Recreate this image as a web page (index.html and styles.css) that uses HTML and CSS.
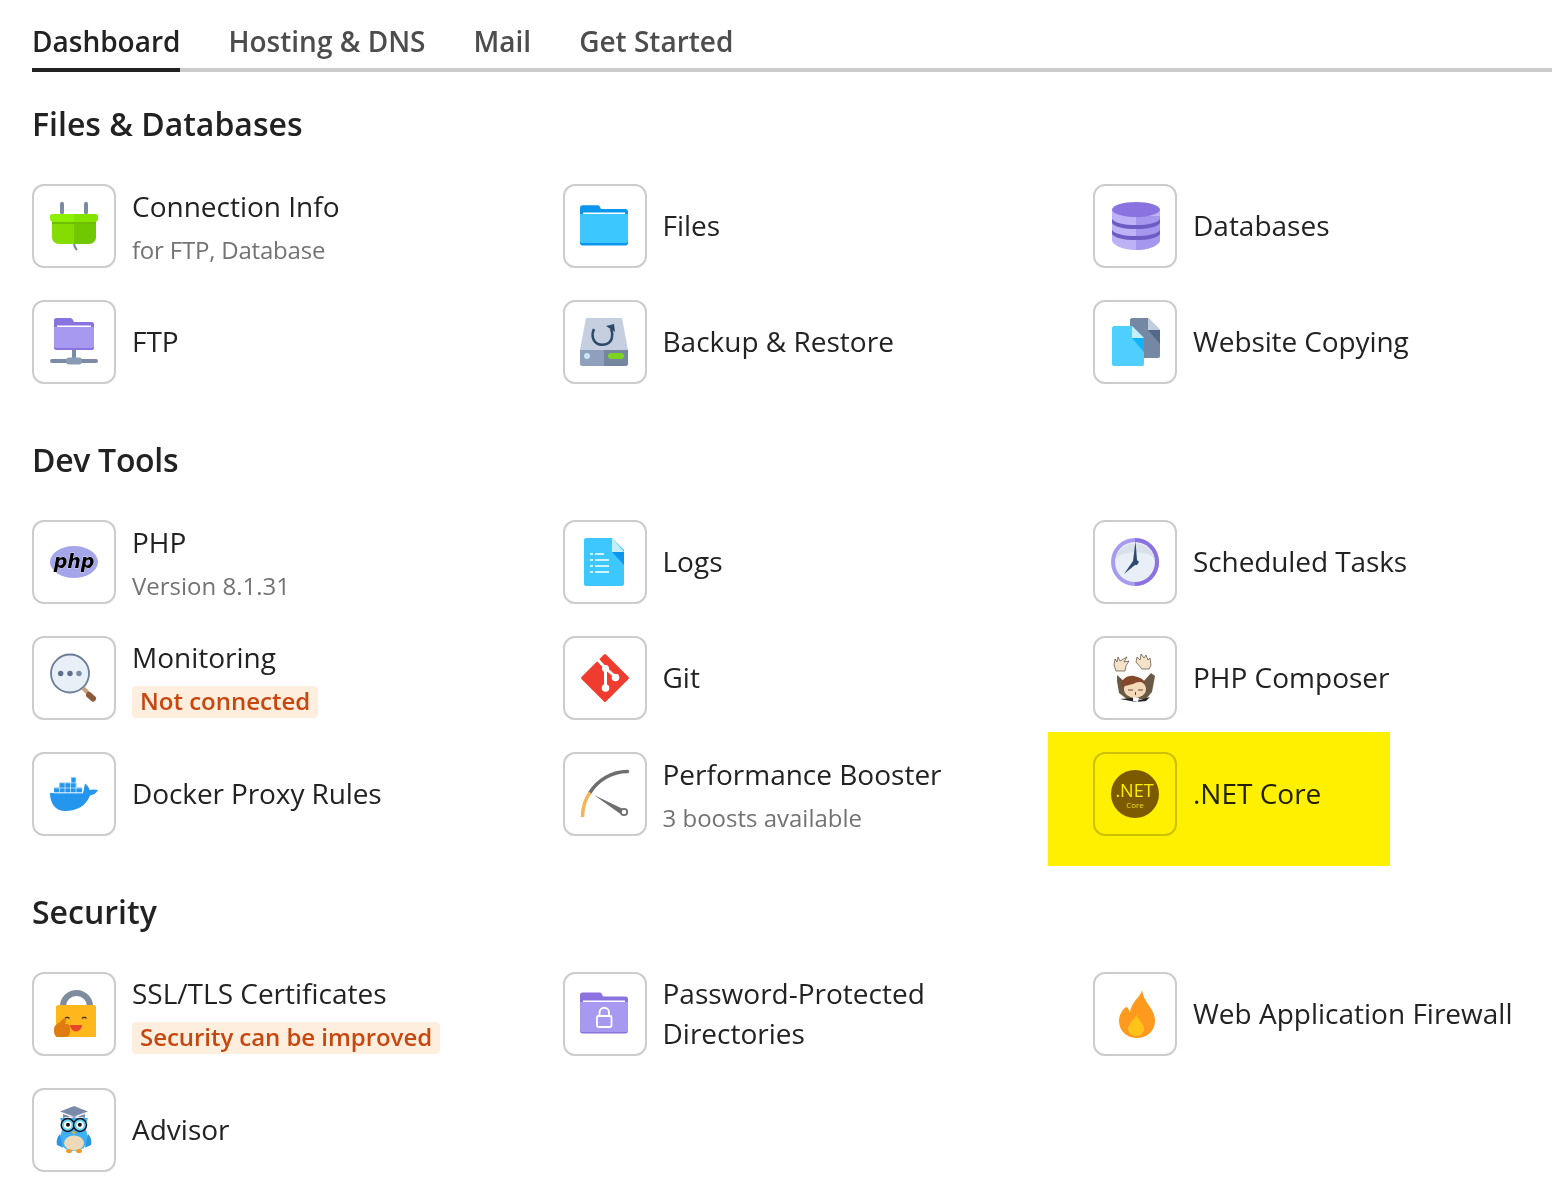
FILE: index.html
```html
<!DOCTYPE html>
<html lang="en">
<head>
<meta charset="utf-8">
<title>Dashboard</title>
<link rel="stylesheet" href="styles.css">
</head>
<body>
<nav class="tabs">
  <a class="tab active">Dashboard</a>
  <a class="tab">Hosting &amp; DNS</a>
  <a class="tab">Mail</a>
  <a class="tab">Get Started</a>
</nav>

<section class="section">
  <h2 class="section-title">Files &amp; Databases</h2>
  <div class="grid">
    <div class="item">
      <div class="icon-box"><svg class="icon" viewBox="0 0 48 48">
        <rect x="10" y="0" width="4" height="12" rx="1.5" fill="#7b8aa5"/><rect x="34" y="0" width="4" height="12" rx="1.5" fill="#7b8aa5"/>
        <path d="M24 41c0 3 1 5 3 7" fill="none" stroke="#7b8aa5" stroke-width="2"/>
        <path d="M2 19h22v23h-15c-4 0-7-3-7-7z" fill="#84dc00"/><path d="M24 19h22v16c0 4-3 7-7 7h-15z" fill="#70c800"/>
        <rect x="2" y="19" width="44" height="3" fill="#6fbf00"/>
        <path d="M2 12h22v8h-21c-2 0-3-2-3-4v-2c0-1 1-2 2-2z" fill="#8cf000"/><path d="M24 12h22c1 0 2 1 2 2v2c0 2-1 4-3 4h-21z" fill="#82e400"/>
      </svg></div>
      <div class="text"><div class="name">Connection Info</div><div class="sub narrow-2">for FTP, Database</div></div>
    </div>
    <div class="item">
      <div class="icon-box"><svg class="icon" viewBox="1 0 48 48">
        <path d="M0 6c0-1.500 1-2.700 2.500-2.700h15c1.200 0 2 .5 2.500 1.700l1 2h24.500c1.500 0 2.500 1 2.500 2.500v31.500c0 1.500-1 2.500-2.500 2.500h-43c-1.500 0-2.500-1-2.500-2.500z" fill="#0b96ee"/>
        <path d="M0 12h48v27c0 1-1 2-2 2h-44c-1 0-2-1-2-2z" fill="#3cc8ff"/>
        <rect x="3" y="10.500" width="42" height="1.500" fill="#fff"/>
      </svg></div>
      <div class="text"><div class="name">Files</div></div>
    </div>
    <div class="item">
      <div class="icon-box"><svg class="icon" viewBox="-1 0 48 48">
        <path d="M0 8h48v30c0 5-11 10-24 10s-24-5-24-10z" fill="#bdb2f5"/>
        <path d="M24 14h24v24c0 5-11 10-24 10z" fill="#a596ee"/>
        <path d="M0 17c3 4 12 6 24 6s21-2 24-6v4c-3 4-12 6-24 6s-21-2-24-6z" fill="#6f5bc4"/>
        <path d="M0 28c3 4 12 6 24 6s21-2 24-6v4c-3 4-12 6-24 6s-21-2-24-6z" fill="#6f5bc4"/>
        <ellipse cx="24" cy="7.500" rx="24" ry="7.500" fill="#8a73e0"/>
      </svg></div>
      <div class="text"><div class="name">Databases</div></div>
    </div>
    <div class="item">
      <div class="icon-box"><svg class="icon" viewBox="0 0 48 48">
        <path d="M4 2c0-1 1-2 2-2h14c1 0 2 .5 3 2l1 2h18c1 0 2 1 2 2v24c0 1-1 2-2 2h-36c-1 0-2-1-2-2z" fill="#8a73e0"/>
        <path d="M4 9h40v19c0 1-1 2-2 2h-36c-1 0-2-1-2-2z" fill="#a899f0"/>
        <rect x="7" y="7.500" width="34" height="1.500" fill="#fff"/>
        <rect x="22" y="32" width="4" height="10" fill="#7b8aa5"/>
        <rect x="0" y="41" width="48" height="4" rx="2" fill="#7b8aa5"/>
        <rect x="16" y="39.500" width="16" height="7" rx="3" fill="#8a9bb5"/>
      </svg></div>
      <div class="text"><div class="name">FTP</div></div>
    </div>
    <div class="item">
      <div class="icon-box"><svg class="icon" viewBox="1 0 48 48">
        <path d="M6 0h36l6 32h-48z" fill="#c5cfe0"/>
        <path d="M0 32h24v16h-22c-1 0-2-1-2-2z" fill="#8ea0bb"/><path d="M24 32h24v14c0 1-1 2-2 2h-22z" fill="#76869f"/>
        <circle cx="7" cy="38" r="3" fill="#c9e6f8"/>
        <rect x="28" y="35" width="16" height="6" rx="3" fill="#7ed321"/>
        <path d="M14 11c-3 6-1 13 4 15 6 2 13 0 14-7 .5-3 0-6-1-8" fill="none" stroke="#2d4a68" stroke-width="2.500"/>
        <path d="M26 8l8-2 1 8z" fill="#2d4a68"/>
      </svg></div>
      <div class="text"><div class="name">Backup &amp; Restore</div></div>
    </div>
    <div class="item">
      <div class="icon-box"><svg class="icon" viewBox="-1 0 48 48">
        <path d="M18 2c0-1 1-2 2-2h16l12 12v26c0 1-1 2-2 2h-26c-1 0-2-1-2-2z" fill="#7488a3"/>
        <path d="M36 12l12 14v-14z" fill="#53698a"/><path d="M36 0l12 12h-12z" fill="#c2cde0"/>
        <path d="M0 10c0-1 1-2 2-2h18l12 12v26c0 1-1 2-2 2h-28c-1 0-2-1-2-2z" fill="#4ecfff"/>
        <path d="M20 20l12 14v-14z" fill="#0fb3fa"/><path d="M20 8l12 12h-12z" fill="#c5eefc"/>
      </svg></div>
      <div class="text"><div class="name narrow-1">Website Copying</div></div>
    </div>
  </div>
</section>

<section class="section">
  <h2 class="section-title narrow-3">Dev Tools</h2>
  <div class="grid">
    <div class="item">
      <div class="icon-box"><svg class="icon" viewBox="0 0 48 48">
        <ellipse cx="24" cy="24" rx="24" ry="16" fill="#a5a5ea"/>
        <text class="php-mark" x="24" y="29.500">php</text>
      </svg></div>
      <div class="text"><div class="name">PHP</div><div class="sub">Version 8.1.31</div></div>
    </div>
    <div class="item">
      <div class="icon-box"><svg class="icon" viewBox="1 0 48 48">
        <path d="M6 0h26l12 12v34c0 1-1 2-2 2h-36c-1 0-2-1-2-2v-44c0-1 1-2 2-2z" fill="#3cc8ff"/>
        <path d="M32 14h12v13z" fill="#0b96ee"/><path d="M32 0l12 14h-12z" fill="#c5eefc"/>
        <path d="M10 16h3M15 16h9M10 22h3M15 22h14M10 28h3M15 28h14M10 34h3M15 34h14" stroke="#fff" stroke-width="1.300" fill="none"/>
      </svg></div>
      <div class="text"><div class="name">Logs</div></div>
    </div>
    <div class="item">
      <div class="icon-box"><svg class="icon" viewBox="0 0 48 48">
        <circle cx="24" cy="24" r="24" fill="#a79bf0"/>
        <path d="M24 0a24 24 0 0 1 0 48z" fill="#8a73e0"/>
        <circle cx="24" cy="24" r="20" fill="#e9eff7"/>
        <path d="M4.500 21a20 20 0 0 1 39 0c-5-9-34-9-39 0z" fill="#d9e0ea"/>
        <path d="M24.500 3l1.500 19 2 2-2 3-2 0-11 9 9-13z" fill="#2d4a70"/>
      </svg></div>
      <div class="text"><div class="name narrow-1">Scheduled Tasks</div></div>
    </div>
    <div class="item">
      <div class="icon-box"><svg class="icon" viewBox="0 0 48 48">
        <circle cx="20" cy="19.500" r="19" fill="#e9eff7" stroke="#6b7c98" stroke-width="1.800"/>
        <circle cx="10.700" cy="19.500" r="2.700" fill="#5d6e8a"/><circle cx="20" cy="19.500" r="2.700" fill="#5d6e8a"/><circle cx="29" cy="19.500" r="2.700" fill="#7b8aa5"/>
        <path d="M33 34l5 5" stroke="#c9a37c" stroke-width="4"/>
        <path d="M39 41l4 3.500" stroke="#8a5a3a" stroke-width="6" stroke-linecap="round"/>
      </svg></div>
      <div class="text"><div class="name">Monitoring</div><div class="badge">Not connected</div></div>
    </div>
    <div class="item">
      <div class="icon-box"><svg class="icon" viewBox="0 0 48 48">
        <path d="M24 0l24 24-24 24-24-24z" fill="#f03c2e" stroke="#f03c2e" stroke-width="3" stroke-linejoin="round" transform="translate(1.440 1.440) scale(.94)"/>
        <path d="M17 6l7.500 8v19M24.500 14l10 9" fill="none" stroke="#fff" stroke-width="3"/>
        <circle cx="24.500" cy="14.500" r="3.500" fill="#fff"/><circle cx="24.500" cy="34" r="3.800" fill="#fff"/><circle cx="34.500" cy="23.500" r="3.800" fill="#fff"/>
      </svg></div>
      <div class="text"><div class="name">Git</div></div>
    </div>
    <div class="item">
      <div class="icon-box"><svg class="icon" viewBox="0 0 48 48">
        <path d="M6 21l9 8 17-1 8-9 4 3-3 16-6 7-18 1-9-7-2-12z" fill="#6a5a45"/>
        <path d="M4 18l11 3M44 15l-11 6" stroke="#fff" stroke-width="3" stroke-linecap="round"/>
        <path d="M5 17l-2-6 1-6 2 3 1-5 2 4 7-4-3 5 5-1-3 5-1 5z" fill="#f4e3c8" stroke="#3a2a1a" stroke-width=".6"/>
        <path d="M31 15l-6-7 1-5 3 3 1-6 3 4 2-3 2 5 2-2 1 7-2 4z" fill="#f4e3c8" stroke="#3a2a1a" stroke-width=".6"/>
        <ellipse cx="24" cy="35" rx="11" ry="9" fill="#f3d9b8"/>
        <path d="M10 33c-1-7 6-12 13-11 5 1 10 3 12 8-6-3-9-2-13 0-4 1-8 2-12 3z" fill="#83492a"/>
        <path d="M17 36h5M27 36h5M24.500 38v3" stroke="#3a2a1a" stroke-width=".8"/>
        <path d="M9 45l14-1 6 2 10-3-4 4-10 1z" fill="#222"/>
        <path d="M22 43l6 1-1 4-5-1z" fill="#fff"/>
      </svg></div>
      <div class="text"><div class="name">PHP Composer</div></div>
    </div>
    <div class="item">
      <div class="icon-box"><svg class="icon" viewBox="0 0 48 48">
        <path d="M0 23h33c1-3 1-6 2-9.500 2.500 2 4 4 4.500 6.500 2-.5 5-1 8.500 0-1.500 3-4.500 5-8 5.500C36 36 27 41 15 41 5 41 0 33 0 23z" fill="#2496ed"/>
        <path d="M4 17.500h28v5h-28zM9.500 12.500h17v5h-17zM21 7.500h5v5h-5z" fill="#2496ed"/>
        <path d="M4 18h28M4 23h29M9.500 18v5M15 13v10M20.500 13v10M26 8v15M9.500 12.800h17M21 8v5" stroke="#fff" stroke-width=".6" fill="none"/>
      </svg></div>
      <div class="text"><div class="name narrow-1">Docker Proxy Rules</div></div>
    </div>
    <div class="item">
      <div class="icon-box"><svg class="icon" viewBox="0 0 48 48">
        <path d="M46.500 1.500c-16 0-30 9-37.500 21" fill="none" stroke="#6e6e6e" stroke-width="3.500" stroke-linecap="round"/>
        <path d="M9 22.500c-5 7-7.500 15-7.500 24.500" fill="none" stroke="#f5b45a" stroke-width="3.500"/>
        <path d="M13 25l29 14-2.500 5z" fill="#6e6e6e"/>
        <circle cx="43" cy="42" r="3.200" fill="#fff" stroke="#6e6e6e" stroke-width="1.800"/>
      </svg></div>
      <div class="text"><div class="name">Performance Booster</div><div class="sub">3 boosts available</div></div>
    </div>
    <div class="item">
      <div class="icon-box"><svg class="icon" viewBox="0 0 48 48">
        <circle cx="24" cy="24" r="24" fill="#7b5fa6"/>
        <text class="net-mark" x="23.500" y="27">.NET</text>
        <text class="net-sub" x="24" y="37.500">Core</text>
      </svg></div>
      <div class="text"><div class="name">.NET Core</div></div>
      <div class="highlight"></div>
    </div>
  </div>
</section>

<section class="section">
  <h2 class="section-title">Security</h2>
  <div class="grid">
    <div class="item">
      <div class="icon-box"><svg class="icon" viewBox="0 0 48 48">
        <path d="M13 17v-1c0-7 6-13 13.500-13s13.500 6 13.500 13v1" fill="none" stroke="#7f8c9d" stroke-width="6"/>
        <path d="M6 17c0-1 1-2 2-2h36c1 0 2 1 2 2v30h-40z" fill="#ffb71b"/>
        <path d="M15 28.500c1-1.500 3.500-1.500 4.500 0M32 28.500c1-1.500 3.500-1.500 4.500 0" stroke="#3a2a1a" stroke-width="1.300" fill="none"/>
        <path d="M20 35h12c0 3.500-3 6.500-6 6.500s-6-3-6-6.500z" fill="#e8462a"/>
        <path d="M4 40c0-5 3-6 6-8l3-3c2-1.500 3 0 3 2l-1 3h2c2 0 3 2 3 4v4c0 3-2 5-5 5h-7c-3 0-4-3-4-7z" fill="#e07b10"/>
      </svg></div>
      <div class="text"><div class="name">SSL/TLS Certificates</div><div class="badge narrow-half">Security can be improved</div></div>
    </div>
    <div class="item">
      <div class="icon-box"><svg class="icon" viewBox="1 0 48 48">
        <path d="M0 5c0-1.500 1-2.500 2.500-2.500h17c1.200 0 2 .5 2.500 1.700l1 2.300h22.500c1.500 0 2.500 1 2.500 2.500v32c0 1.500-1 2.500-2.500 2.500h-43c-1.500 0-2.500-1-2.500-2.500z" fill="#8a73e0"/>
        <path d="M0 12h48v28c0 1.500-1 2-2 2h-44c-1 0-2-.5-2-2z" fill="#a899f0"/>
        <rect x="3" y="10.500" width="42" height="1.500" fill="#fff"/>
        <rect x="17" y="26" width="14.500" height="11" rx="1.500" fill="none" stroke="#fff" stroke-width="1.800"/>
        <path d="M19.500 26v-3.500a4.700 4.700 0 0 1 9.500 0v3.500" fill="none" stroke="#fff" stroke-width="1.800"/>
      </svg></div>
      <div class="text"><div class="name">Password-Protected<br>Directories</div></div>
    </div>
    <div class="item">
      <div class="icon-box"><svg class="icon" viewBox="0 0 48 48">
        <path d="M31 0c-1 6-8 10-11 18-1 2-1 5-1 5-1-3-2-6-4-6-4 3-7 8-7 14 0 10 8 17 18 17s18-7 18-17c0-13-11-17-13-31z" fill="#ff9a1f"/>
        <path d="M25 24c1 4-8 9-8 15 0 4 4 7 8 7s8-3 8-7c0-6-6-9-8-15z" fill="#ffc31a"/>
      </svg></div>
      <div class="text"><div class="name">Web Application Firewall</div></div>
    </div>
    <div class="item">
      <div class="icon-box"><svg class="icon" viewBox="0 0 48 48">
        <path d="M10 12l3 8-1 4-2 7c-1 8 5 14 14 14s14-6 14-14l-2-7-1-4 3-8z" fill="#3fb0f0"/>
        <path d="M10 28c-3 3-4 7-3 11 2 1 5 2 6 3z" fill="#2a95e8"/><path d="M38 28c3 3 4 7 3 11-2 1-5 2-6 3z" fill="#2a95e8"/>
        <ellipse cx="24" cy="37" rx="10" ry="7.500" fill="#ecd9b8"/>
        <path d="M24 0l14 5.500-14 5-14-5z" fill="#7a8aa8"/><path d="M13 8v4c6-2 16-2 22 0v-4l-11 4z" fill="#7a8aa8"/>
        <circle cx="17.700" cy="19" r="6.500" fill="#5ed0e8" stroke="#112" stroke-width="1.400"/><circle cx="30" cy="19" r="6.500" fill="#5ed0e8" stroke="#112" stroke-width="1.400"/>
        <circle cx="17.700" cy="19" r="3.800" fill="#fff"/><circle cx="30" cy="19" r="3.800" fill="#fff"/>
        <circle cx="18" cy="18.700" r="2" fill="#111"/><circle cx="29.800" cy="18.700" r="2" fill="#111"/>
        <path d="M21.800 25.500h4l-2 3.500z" fill="#f4a91f"/>
        <ellipse cx="19" cy="45" rx="3" ry="2" fill="#ef9a2a"/><ellipse cx="29" cy="45" rx="3" ry="2" fill="#ef9a2a"/>
      </svg></div>
      <div class="text"><div class="name">Advisor</div></div>
    </div>
  </div>
</section>
</body>
</html>
```
FILE: styles.css
```css
* { box-sizing: border-box; }
html, body { margin: 0; padding: 0; background: #fff; }
body {
  width: 1552px;
  height: 1194px;
  overflow: hidden;
  font-family: "Open Sans", "Liberation Sans", sans-serif;
  font-kerning: normal;
  text-rendering: optimizeLegibility;
  color: #222;
}
.tabs {
  display: flex;
  gap: 48px;
  height: 72px;
  margin-left: 32px;
  padding-top: 20px;
  border-bottom: 4px solid #ccc;
}
.tab {
  height: 52px;
  line-height: 42px;
  font-size: 28px;
  font-weight: 600;
  color: #4d4d4d;
  text-decoration: none;
}
.tab.active {
  color: #222;
  border-bottom: 4px solid #222;
}
.section { padding: 32px 0 24px 32px; }
.section:last-child { padding-bottom: 0; }
.section-title {
  margin: 0 0 40px;
  height: 40px;
  line-height: 40px;
  font-size: 32px;
  font-weight: 600;
  color: #222;
}
.grid {
  display: grid;
  grid-template-columns: repeat(3, 530.5px);
  row-gap: 32px;
}
.item {
  position: relative;
  display: flex;
  align-items: center;
  gap: 16px;
  height: 84px;
}
.icon-box {
  flex: none;
  width: 84px;
  height: 84px;
  display: flex;
  align-items: center;
  justify-content: center;
  background: #fff;
  border: 2px solid #ccc;
  border-radius: 12px;
}
.icon { display: block; width: 48px; height: 48px; overflow: visible; }
.text {
  display: flex;
  flex-direction: column;
  align-items: flex-start;
  margin-bottom: 2px;
}
.name { font-size: 28px; line-height: 40px; color: #222; }
.sub {
  margin-top: 4px;
  height: 34px;
  font-size: 24px;
  line-height: 40px;
  color: #737373;
}
.badge {
  margin: 9px 0 -1px;
  padding: 0 8px;
  height: 32px;
  line-height: 30px;
  font-size: 24px;
  font-weight: 600;
  color: #c8470f;
  background: #fdeedd;
  border-radius: 4px;
}
.narrow-half { letter-spacing: -.05px; }
.narrow-1 { letter-spacing: -.1px; }
.narrow-2 { letter-spacing: -.2px; }
.narrow-3 { letter-spacing: -.3px; }
.highlight {
  position: absolute;
  left: -45px;
  top: -20px;
  width: 342px;
  height: 134px;
  background: #fff000;
  mix-blend-mode: multiply;
}
.php-mark {
  font-family: "DejaVu Sans", sans-serif;
  font-size: 19px;
  font-weight: 700;
  font-style: italic;
  text-anchor: middle;
  fill: #000;
  stroke: #fff;
  stroke-width: .5px;
  paint-order: stroke;
}
.net-mark {
  font-family: "Open Sans", sans-serif;
  font-size: 18px;
  font-weight: 400;
  text-anchor: middle;
  fill: #fff;
}
.net-sub {
  font-family: "Open Sans", sans-serif;
  font-size: 8px;
  text-anchor: middle;
  fill: #eee;
}
```
